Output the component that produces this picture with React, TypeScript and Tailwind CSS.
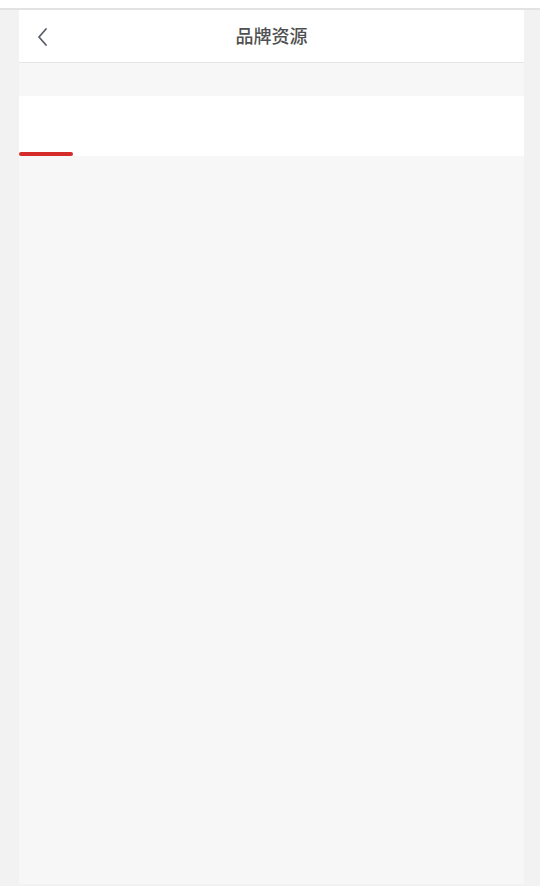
export default function App() {
  return (
    <div className="flex h-[886px] w-[540px] flex-col overflow-hidden bg-[#f2f2f2] font-['Noto_Sans_CJK_SC',sans-serif]">
      <div className="h-[8px] shrink-0 bg-white" />
      <div className="h-[2px] shrink-0 bg-[#e2e2e2]" />
      <div className="mx-[19px] flex w-[505px] flex-1 flex-col bg-[#f7f7f7]">
        <div className="relative flex h-[53px] shrink-0 items-center justify-center border-b border-[#e6e6e6] bg-white">
          <svg className="absolute left-[17px] top-[17px]" width="14" height="20" viewBox="0 0 14 20" fill="none">
            <path d="M10 2 L3 10 L10 18" stroke="#5a5e68" strokeWidth="1.8" strokeLinecap="round" strokeLinejoin="round" />
          </svg>
          <span className="-mt-[1px] text-[18px] font-medium text-[#505050]">品牌资源</span>
        </div>
        <div className="h-[33px] shrink-0 bg-[#f7f7f7]" />
        <div className="flex h-[60px] shrink-0 items-end bg-white">
          <div className="h-[4px] w-[54px] rounded-full bg-[#d62b2b]" />
        </div>
        <div className="flex-1 bg-[#f7f7f7]" />
      </div>
      <div className="h-[2px] shrink-0" />
    </div>
  );
}
